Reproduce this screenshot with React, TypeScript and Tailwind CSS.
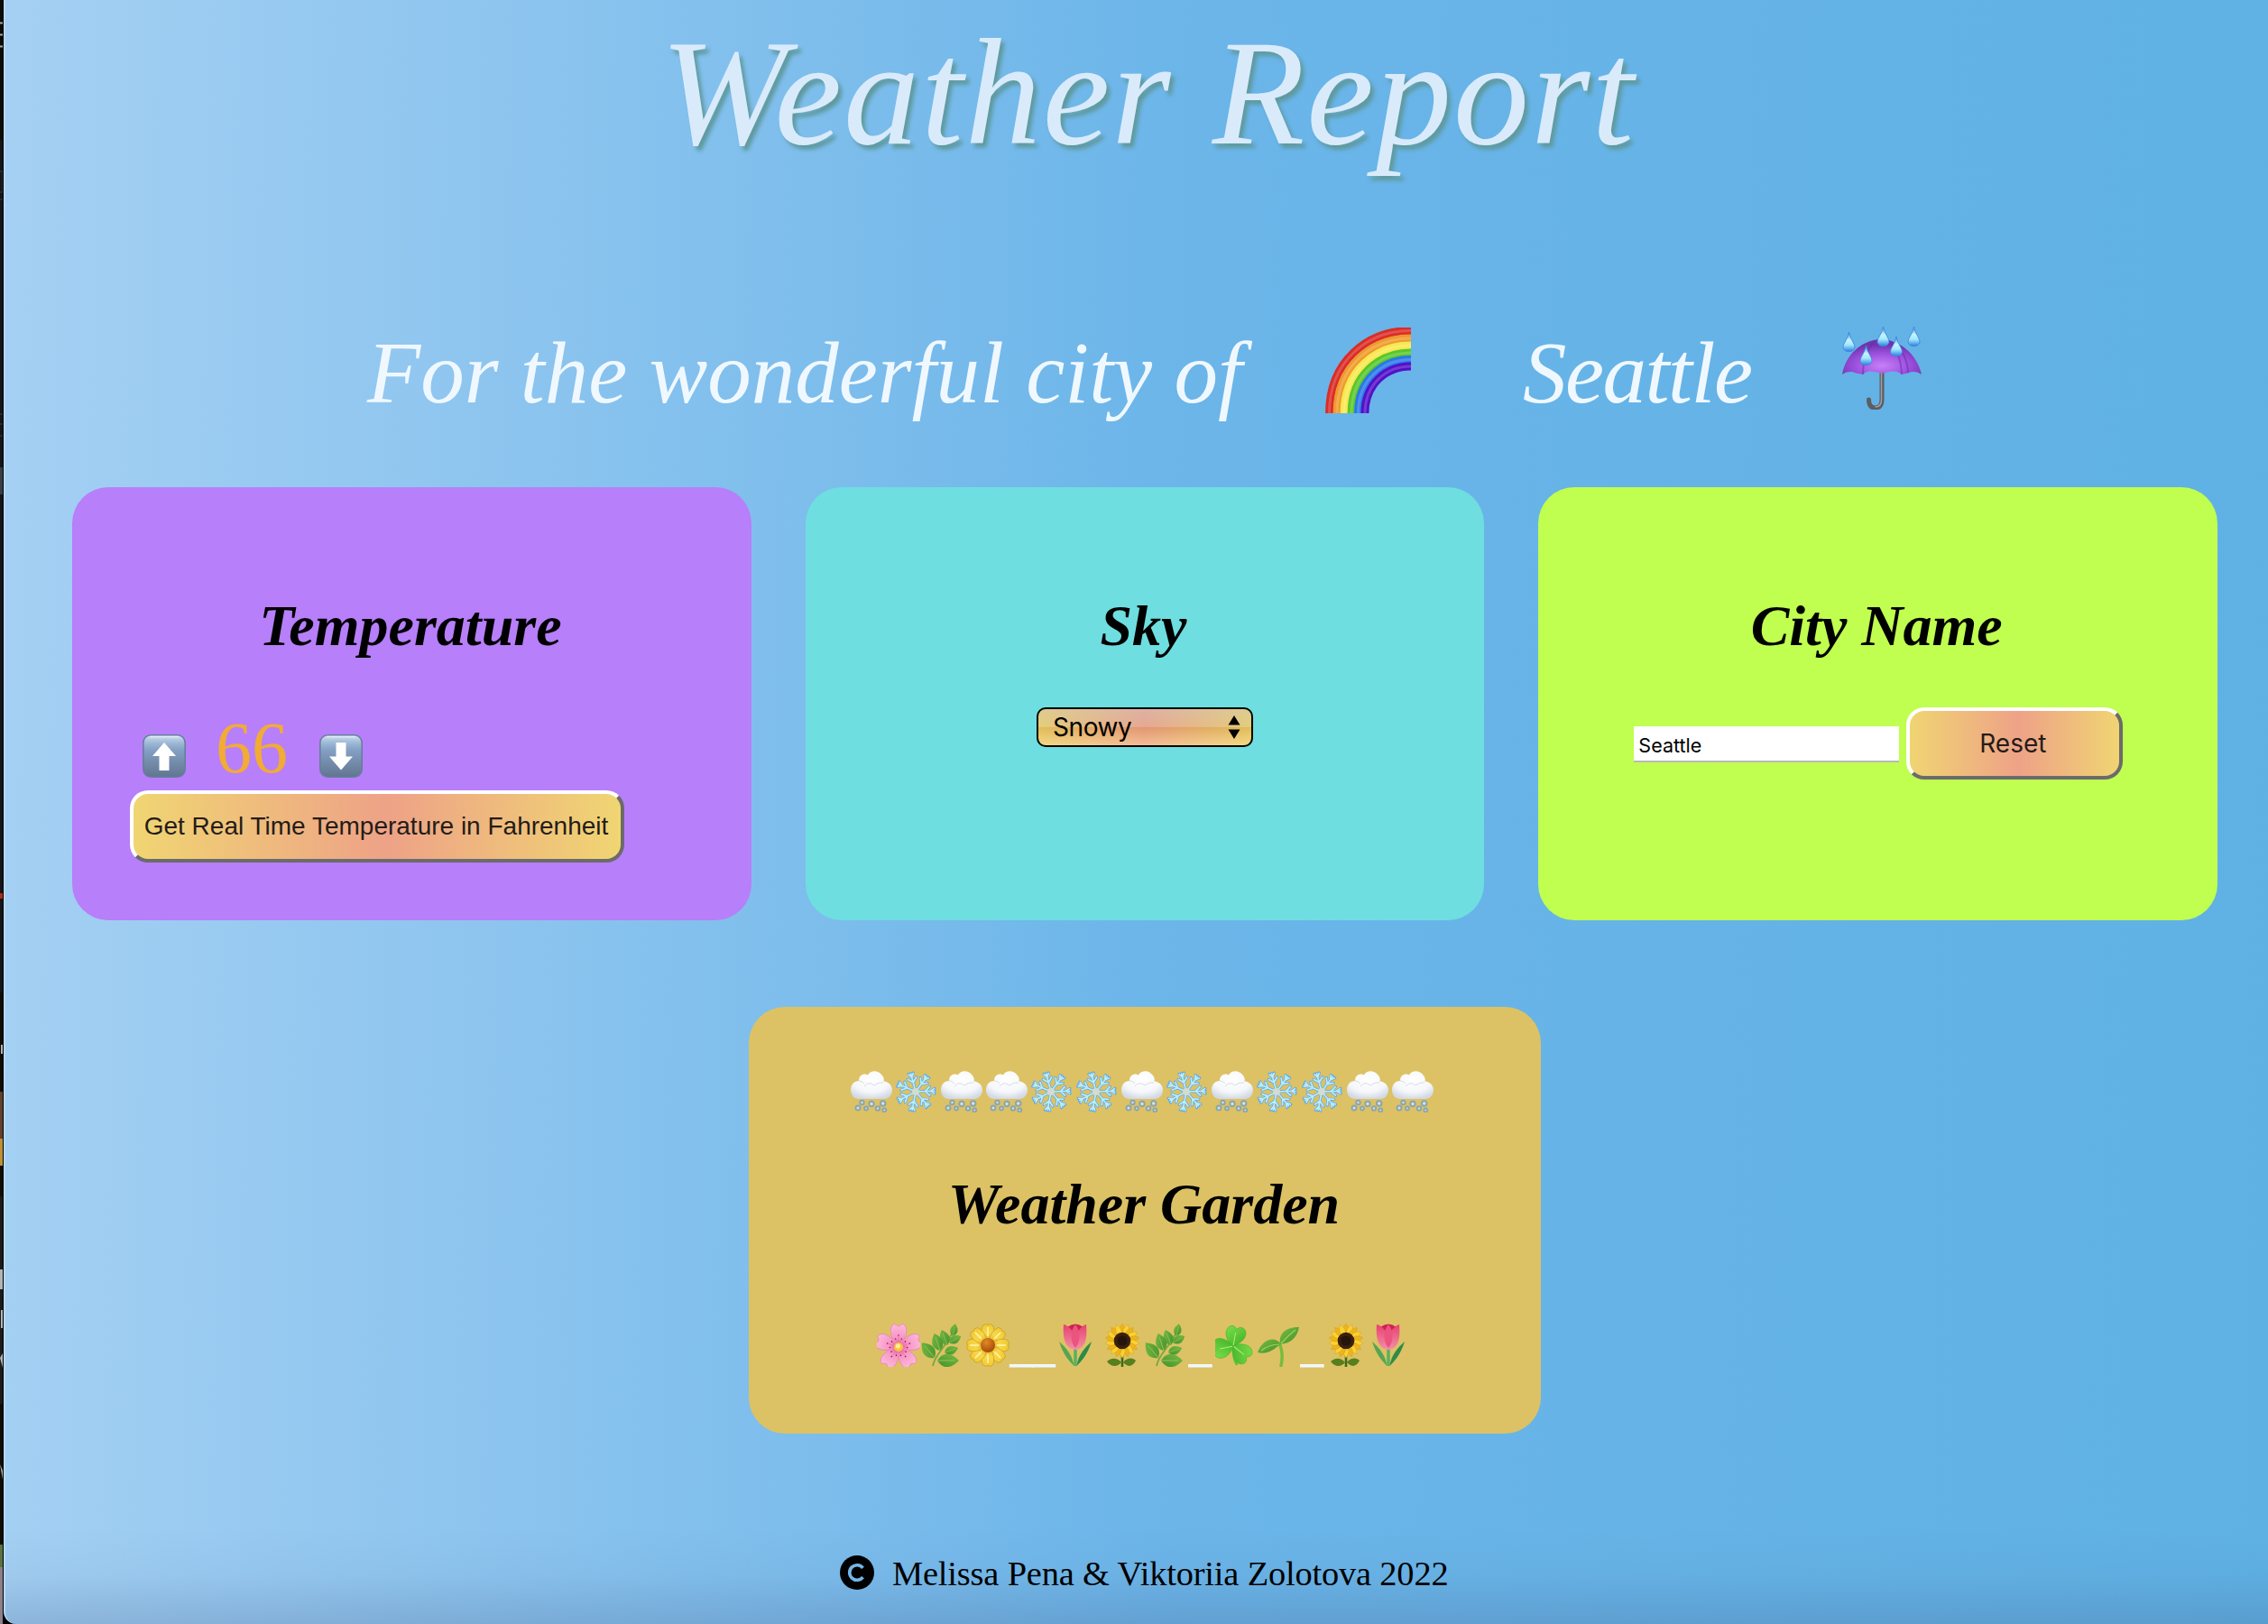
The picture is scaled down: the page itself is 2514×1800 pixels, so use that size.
import React from "react";

type IconProps = { className?: string };

const SCRIPT = "[font-family:'Apple_Chancery','Z003','URW_Chancery_L','Liberation_Serif',serif]";
const SERIF = "[font-family:'Liberation_Serif',serif]";

function Defs() {
  return (
    <svg width="0" height="0" className="absolute" aria-hidden="true">
      <defs>
        <linearGradient id="key" x1="0" y1="0" x2="0" y2="1">
          <stop offset="0" stopColor="#d3e2f0" />
          <stop offset="0.16" stopColor="#a3bdd9" />
          <stop offset="0.35" stopColor="#84a0c4" />
          <stop offset="1" stopColor="#61758f" />
        </linearGradient>
        <radialGradient id="cloud" cx="0.5" cy="0.3" r="0.7">
          <stop offset="0" stopColor="#ffffff" />
          <stop offset="0.65" stopColor="#f6f7fa" />
          <stop offset="1" stopColor="#d3dae6" />
        </radialGradient>
        <radialGradient id="brolly" cx="0.5" cy="0.75" r="0.6">
          <stop offset="0" stopColor="#c97ef8" />
          <stop offset="0.6" stopColor="#9a4fdc" />
          <stop offset="1" stopColor="#7034b0" />
        </radialGradient>
        <linearGradient id="drop" x1="0" y1="0" x2="0" y2="1">
          <stop offset="0" stopColor="#3f8fe0" />
          <stop offset="0.4" stopColor="#c5f3ff" />
          <stop offset="0.65" stopColor="#a5e8ff" />
          <stop offset="1" stopColor="#2b7fe0" />
        </linearGradient>
        <radialGradient id="pink" cx="24" cy="25" r="24" gradientUnits="userSpaceOnUse">
          <stop offset="0" stopColor="#e8609a" />
          <stop offset="0.4" stopColor="#f796c6" />
          <stop offset="1" stopColor="#fcb7dc" />
        </radialGradient>
        <radialGradient id="yellow" cx="24" cy="24" r="24" gradientUnits="userSpaceOnUse">
          <stop offset="0" stopColor="#dd9a16" />
          <stop offset="0.55" stopColor="#f7d848" />
          <stop offset="1" stopColor="#f0c832" />
        </radialGradient>
        <radialGradient id="bud" cx="0.4" cy="0.3" r="0.7">
          <stop offset="0" stopColor="#e08a28" />
          <stop offset="1" stopColor="#a84a08" />
        </radialGradient>
        <linearGradient id="tulip" x1="0" y1="0" x2="0" y2="1">
          <stop offset="0" stopColor="#e8406f" />
          <stop offset="1" stopColor="#f291a6" />
        </linearGradient>
        <linearGradient id="leaf" x1="0" y1="0" x2="1" y2="1">
          <stop offset="0" stopColor="#78bd42" />
          <stop offset="1" stopColor="#458f2c" />
        </linearGradient>
        <linearGradient id="clover" x1="0" y1="0" x2="1" y2="1">
          <stop offset="0" stopColor="#7be04a" />
          <stop offset="1" stopColor="#3fae26" />
        </linearGradient>
      </defs>
    </svg>
  );
}

function Rainbow({ className }: IconProps) {
  const bands: [number, string][] = [
    [91.5, "#dc2c26"],
    [83, "#f09a2c"],
    [75, "#f8e850"],
    [67, "#58c82a"],
    [59.5, "#2a78ea"],
    [52, "#5410c8"],
  ];
  return (
    <svg viewBox="0 0 96 96" className={className}>
      {bands.map(([r, c]) => (
        <g key={c} fill="none">
          <path d={`M${96 - r} 95 C${96 - r} ${95 - r * 0.62} ${96 - r * 0.55} ${95 - r} 95 ${95 - r}`} stroke={c} strokeWidth="8.8" />
          <path d={`M${96 - r} 95 C${96 - r} ${95 - r * 0.62} ${96 - r * 0.55} ${95 - r} 95 ${95 - r}`} stroke="#fff" strokeOpacity="0.18" strokeWidth="3" />
        </g>
      ))}
    </svg>
  );
}

function Umbrella({ className }: IconProps) {
  const drops: [number, number][] = [[8, 6], [46, 0], [80, 0], [60.5, 11], [27, 21]];
  return (
    <svg viewBox="0 0 90 92" className={className}>
      <path d="M45 50V81Q45 90 37.500 90Q30.500 90 30.500 81" fill="none" stroke="#5d5d61" strokeWidth="5" strokeLinecap="round" />
      <path d="M44.500 51V81Q44.500 89 37.500 89" fill="none" stroke="#a0a0a4" strokeWidth="1.500" />
      <path d="M1 53C5 31 22 15 44 14C66 15 84 31 89 53Q82 48 74 51.500L67 53Q61 48 53 50L45 52L36 50Q29 48 24 53L16 51.500Q8 48 1 53Z" fill="url(#brolly)" />
      <path d="M67 53Q66 29 53 16M74 51Q73 30 58 18M24 53Q24 31 36 17" fill="none" stroke="#6a2ea8" strokeOpacity="0.55" strokeWidth="1.800" />
      {drops.map(([x, y]) => (
        <path key={x} transform={`translate(${x - 7} ${y}) scale(1 0.94)`} d="M7.500 0C9 9 14 13 14 18.500A6.700 6 0 0 1 1 18.500C1 13 6 9 7.500 0Z" fill="url(#drop)" stroke="#3c88dc" strokeWidth="0.900" />
      ))}
    </svg>
  );
}

function ArrowKey({ down, className }: IconProps & { down?: boolean }) {
  return (
    <svg viewBox="0 0 48 48" className={className}>
      <rect x="0.800" y="0.800" width="46.400" height="46.400" rx="8.500" fill="url(#key)" stroke="#687e9e" strokeWidth="1.600" />
      <path d="M8 2.600H40" stroke="#e9f2fa" strokeWidth="1.500" strokeOpacity="0.700" />
      <path d={down ? "M18.500 9H29.500V24.500H37L24 39.500L11 24.500H18.500Z" : "M24 9L37 24H29.500V40H18.500V24H11Z"} fill="#fff" />
    </svg>
  );
}

function SnowCloud() {
  const flakes: [number, number, number][] = [[8, 41, 2.5], [12.5, 35, 2.2], [17, 41.500, 1.9], [23, 36.500, 2.7], [30, 41.500, 2.2], [35.700, 36, 2.8], [37.300, 43.500, 1.900]];
  return (
    <svg viewBox="0 0 46 46" className="h-[46px] w-[46px]">
      <path d="M10 31C3 31 0 26 0 21C0 15 4 11 9 11C9 5 14 2 19 4.500C22 -1 30 -1 34 4C37 7 37 9 36.500 11.500C42 12 46 16 46 21C46 27 42 31 36 31Z" fill="url(#cloud)" />
      <path d="M15 17Q20 11 26 16Q31 12 36 13M9 11Q13 11 15 14" fill="none" stroke="#d8dde7" strokeWidth="1" />
      {flakes.map(([x, y, r], i) => (
        <circle key={i} cx={x} cy={y} r={r} fill="#d5e0e2" stroke="#8ca6ac" strokeWidth="2" />
      ))}
    </svg>
  );
}

function Snowflake() {
  return (
    <svg viewBox="-23 -23 46 46" className="-ml-px mr-px h-[46px] w-[46px]">
      {[-15, 36.400, 87.900, 139.300, 190.700, 242.200, 293.600].map((a) => (
        <g key={a} transform={`rotate(${a})`} fill="none" strokeLinecap="round" strokeLinejoin="round">
          <path d="M0 0V-21M0 -10.500L-5 -15.500M0 -10.500L5 -15.500M0 -16.500L-2.800 -21M0 -16.500L2.800 -21" stroke="#5fa6ea" strokeWidth="3.100" />
          <path d="M0 0V-20.500M0 -10.500L-4.800 -15.300M0 -10.500L4.800 -15.300M0 -16.500L-2.600 -20.500M0 -16.500L2.600 -20.500" stroke="#b9eef8" strokeWidth="1.700" />
        </g>
      ))}
      <circle r="4" fill="#d2dcd2" />
    </svg>
  );
}

function Blossom() {
  return (
    <svg viewBox="0 0 48 48" className="h-[48px] w-[48px]">
      {[0, 72, 144, 216, 288].map((a) => (
        <g key={a} transform={`rotate(${a} 24 26)`}>
          <path d="M24 26C16 18 13 7 17 2Q19 -1 21.500 1.500L24 3L26.500 1.500Q29 -1 31 2C35 7 32 18 24 26Z" fill="url(#pink)" stroke="#e87fb2" strokeWidth="0.700" />
          <path d="M24 25V14M24 25L21 17M24 25L27 17" stroke="#d9649a" strokeWidth="0.500" />
          <circle cx="24" cy="13" r="0.800" fill="#9c1444" />
          <circle cx="20.500" cy="17" r="0.800" fill="#9c1444" />
          <circle cx="27.500" cy="17" r="0.800" fill="#9c1444" />
        </g>
      ))}
      <circle cx="24" cy="26" r="5" fill="#f5c443" />
      <circle cx="23.500" cy="25" r="2.500" fill="#fdf09a" />
    </svg>
  );
}

function Herb() {
  const leaves: [number, number, number, number][] = [
    [34, 14, 12, 14], [28, 24, -20, 18], [30, 21, 62, 15], [20, 30, -18, 20], [25, 32, 72, 16], [14, 38, -40, 22], [17, 41, 90, 24],
  ];
  return (
    <svg viewBox="0 0 48 48" className="h-[48px] w-[48px]">
      <path d="M13 47C15 34 28 26 35 9" fill="none" stroke="#79a63e" strokeWidth="1.800" />
      {leaves.map(([x, y, a, l], i) => (
        <g key={i} transform={`translate(${x + 1} ${y}) rotate(${a}) scale(${l / 20})`}>
          <path d="M0 0C-8 -5 -8 -12 0 -20C8 -12 8 -5 0 0Z" fill="url(#leaf)" />
          <path d="M0 0V-16" stroke="#8cc057" strokeWidth="0.900" />
        </g>
      ))}
    </svg>
  );
}

function Daisy() {
  return (
    <svg viewBox="0 0 48 48" className="h-[48px] w-[48px]">
      {[0, 45, 90, 135, 180, 225, 270, 315].map((a) => (
        <g key={a} transform={`rotate(${a} 24 24)`}>
          <path d="M24 24C17 15 16 7 18.500 2Q21.500 -0.500 24 1.500Q26.500 -0.500 29.500 2C32 7 31 15 24 24Z" fill="url(#yellow)" stroke="#c99820" strokeWidth="0.700" />
          <path d="M24 14V4" stroke="#fff3a4" strokeWidth="1.600" />
        </g>
      ))}
      <circle cx="24" cy="24" r="8" fill="url(#bud)" />
    </svg>
  );
}

function Tulip() {
  return (
    <svg viewBox="0 0 48 48" className="-ml-1 h-[48px] w-[48px]">
      <path d="M24 26V47" stroke="#58b35c" strokeWidth="3.500" />
      <path d="M22.500 47C18 42 11 36 6 20C13 26 21 35 22.500 47Z" fill="#57a552" />
      <path d="M25.500 47C30 42 37 36 42 20C35 26 27 35 25.500 47Z" fill="#2f8a48" />
      <path d="M15 4Q24 -3 33 4L30 16H18Z" fill="#cf2150" />
      <path d="M11 1C16 2 21 7 24 14C27 7 32 2 36 1C37 12 37 28 24 29C11 28 10 12 11 1Z" fill="url(#tulip)" />
      <path d="M24 1C18 8 18 20 24 27C30 20 30 8 24 1Z" fill="#ea547f" />
    </svg>
  );
}

function Sunflower() {
  return (
    <svg viewBox="0 0 48 48" className="h-[48px] w-[48px]">
      <path d="M24 34V48" stroke="#3c6a1c" strokeWidth="2.600" />
      <path d="M23 43C18 37 11 38 7 42C12 49 19 48 23 43ZM25 43C30 37 36 38 39 41C35 49 29 48 25 43Z" fill="#577f1e" />
      {Array.from({ length: 18 }, (_, i) => i * 20).map((a) => (
        <path key={a} transform={`rotate(${a} 24 19)`} d="M24 13C19 9 21 4 24 0C27 4 29 9 24 13Z" fill={a % 40 ? "#f9d332" : "#edb41c"} stroke="#d9950f" strokeWidth="0.400" />
      ))}
      <circle cx="24" cy="19" r="9.300" fill="#3a210d" />
      <circle cx="24" cy="19" r="5.500" fill="#25150a" />
    </svg>
  );
}

function Shamrock() {
  return (
    <svg viewBox="0 0 48 48" className="ml-1 h-[48px] w-[48px]">
      <path d="M21 25C21 34 22 42 25 46" fill="none" stroke="#5cc63a" strokeWidth="3" strokeLinecap="round" />
      {[10, 128, 258].map((a) => (
        <g key={a} transform={`rotate(${a} 21 25)`}>
          <path d="M21 25C12 21 7 10 12 4Q17 -1 21.500 5Q27 -1 32 5C36 12 29 21 21 25Z" fill="url(#clover)" stroke="#48b02c" strokeWidth="0.600" />
          <path d="M21 24V9" stroke="#a8f07a" strokeWidth="1.100" />
        </g>
      ))}
    </svg>
  );
}

function Seedling() {
  return (
    <svg viewBox="0 0 48 48" className="h-[48px] w-[48px]">
      <path d="M27 47C29 37 28 28 25 22" fill="none" stroke="#74bd3a" strokeWidth="3.400" strokeLinecap="round" />
      <path d="M26 23C24 11 32 4 47 4C45 15 38 22 26 23Z" fill="url(#leaf)" />
      <path d="M26 23C23 15 8 14 1 32C12 35 20 28 26 23Z" fill="url(#leaf)" />
      <path d="M27 22Q35 13 43 7M25 23Q14 23 5 30" fill="none" stroke="#96d45c" strokeWidth="1.200" />
    </svg>
  );
}

const SKY = "csccsscscsscc";

const GARDEN: (React.FC | string)[] = [Blossom, Herb, Daisy, "__", Tulip, Sunflower, Herb, "_", Shamrock, Seedling, "_", Sunflower, Tulip];

function Card({ title, color, children }: { title: string; color: string; children: React.ReactNode }) {
  return (
    <section className={`h-[480px] flex-1 rounded-[40px] pt-[118px] ${color}`}>
      <h2 className="pr-[3px] text-center text-[64px] leading-[72px] font-bold italic">{title}</h2>
      {children}
    </section>
  );
}

const BUTTON =
  "h-20 rounded-[20px] border-4 border-t-white border-l-white border-r-[#6b6b6b] border-b-[#6b6b6b] bg-[linear-gradient(90deg,#f0d672,#eea287_52%,#f0d672)] bg-origin-border text-[28px] whitespace-nowrap text-[#241c18]";

function Background() {
  return (
    <svg viewBox="0 0 3 1800" className="absolute top-0 left-0 h-[1800px] w-[3px]">
      <rect width="3" height="1800" fill="#15161c" />
      <rect width="3" height="155" fill="#0d0c05" />
      <path d="M0 25.500H3M0 38.500H3M0 51.500H3" stroke="#aaa" strokeWidth="2" />
      <path d="M0 190H3V213H0M0 221H3M0 459H3M0 470H3M0 483H3" stroke="#3a3e45" fill="none" />
      <rect y="518" width="3" height="30" fill="#3a3e45" />
      <rect y="990" width="3" height="6" fill="#b82a18" />
      <rect y="1100" width="3" height="700" fill="#100d05" />
      <rect y="1210" width="3" height="52" fill="#65402c" />
      <rect y="1262" width="3" height="30" fill="#c09033" />
      <rect y="1326" width="3" height="230" fill="#1d1c1a" />
      <path d="M1 1158H3V1168H1ZM0 1407H3V1429H0ZM1 1452H3V1472H1ZM0 1505L3 1500V1516ZM0 1623L3 1630V1640Z" fill="#b5b5b5" />
      <rect y="1712" width="3" height="25" fill="#59743c" />
      <rect y="1737" width="3" height="63" fill="#8d7f8b" />
    </svg>
  );
}

export default function App() {
  return (
    <div className={`relative h-[1800px] w-[2514px] overflow-hidden bg-black pl-1 text-black ${SERIF}`}>
      <Defs />
      <Background />
      <div className="flex h-[1800px] flex-col overflow-hidden rounded-bl-[14px] border-l-2 border-[#b4d9f6] bg-[linear-gradient(180deg,transparent_94%,rgba(70,95,140,0.05)_97%,rgba(70,95,140,0.24)_100%),linear-gradient(91deg,#a5d0f3_0%,#6bb5e9_52%,#5fb1e4_100%)]">
        <header className={`flex h-[540px] flex-col italic ${SCRIPT}`}>
          <h1 className="mt-0.5 pl-[726px] text-[168px] leading-[200px] tracking-[2px] whitespace-nowrap text-[#d9ebfb] [text-shadow:4px_5px_4px_#5f9a9f]">Weather Report</h1>
          <div className="mt-[158px] flex h-[108px] items-start text-[97px] leading-[108px] whitespace-nowrap text-[#f0f8ff]">
            <span className="w-[1463px] pl-[401px]">For the wonderful city of</span>
            <Rainbow className="mt-[3px] h-24 w-24" />
            <span className="w-[476px] pl-[123px] tracking-[-1.5px]">Seattle</span>
            <Umbrella className="mt-0.5 h-[92px] w-[90px]" />
          </div>
        </header>

        <main>
          <div className="flex gap-[60px] pr-14 pl-[74px]">
            <Card title="Temperature" color="bg-[#b77ffa]">
              <div className="mt-[55px] flex h-[91px] items-start pl-[78px]">
                <ArrowKey className="mt-[29px] h-12 w-12" />
                <span className="mr-[35px] ml-[33px] w-20 text-[80px] leading-[88px] text-[#f2ab34]">66</span>
                <ArrowKey down className="mt-[29px] h-12 w-12" />
              </div>
              <button className={`ml-16 w-[548px] pr-0.5 [font-family:'Liberation_Sans',sans-serif] ${BUTTON}`}>Get Real Time Temperature in Fahrenheit</button>
            </Card>

            <Card title="Sky" color="bg-[#6edee0]">
              <div className="mx-auto mt-[54px] flex h-11 w-60 items-center justify-between rounded-[10px] border-2 border-black bg-[linear-gradient(180deg,rgba(205,200,200,0.5),rgba(205,200,200,0.25)_50%,rgba(190,130,60,0.25)_50%,rgba(255,235,190,0.45)),linear-gradient(90deg,#ecd060,#ee9c82_50%,#ecd060)] bg-origin-border pr-3 pl-4 [font-family:'Inter',sans-serif]">
                <span className="text-[28px] tracking-[-0.4px]">Snowy</span>
                <svg viewBox="0 0 14 26" className="h-[26px] w-[14px]">
                  <path d="M7 0L13.500 10.500H0.500ZM7 26L13.500 15.500H0.500Z" />
                </svg>
              </div>
            </Card>

            <Card title="City Name" color="bg-[#c0fe50]">
              <div className="mt-[54px] flex items-start pl-[106px] [font-family:'Inter',sans-serif]">
                <input readOnly value="Seattle" className="mt-[21px] h-10 w-[294px] border-b-2 border-[#b9b9b9] bg-white px-[5px] pt-1 text-[21.500px] outline-none" />
                <button className={`ml-2 w-60 pr-1 ${BUTTON}`}>Reset</button>
              </div>
            </Card>
          </div>

          <section className="mt-24 ml-[824px] h-[473px] w-[878px] rounded-[40px] bg-[#dcc265] pt-[71px]">
            <div className="flex h-[46px] gap-1 pl-[113px]">
              {SKY.split("").map((k, i) => (k === "c" ? <SnowCloud key={i} /> : <Snowflake key={i} />))}
            </div>
            <h2 className="mt-[66px] pr-0.5 text-center text-[64px] leading-[72px] font-bold italic">Weather Garden</h2>
            <div className="mt-24 flex h-12 pl-[141px] text-[49.500px] text-[#f0f8ff]">
              {GARDEN.map((Item, i) =>
                typeof Item === "string" ? (
                  <span key={i} className="[-webkit-text-stroke:1px_#f0f8ff] [line-height:52px]">{Item}</span>
                ) : (
                  <span key={i} className="flex w-[49.600px] justify-center"><Item /></span>
                ),
              )}
            </div>
          </section>
        </main>

        <footer className="mt-[126px] flex items-center pl-[925px] text-[38.400px] leading-[50px]">
          <svg viewBox="0 0 38 38" className="mt-0.5 h-[38px] w-[38px]">
            <circle cx="19" cy="19" r="19" />
            <path d="M25.500 13.800A8.300 8.300 0 1 0 25.500 24.200" fill="none" stroke="#76b6e6" strokeWidth="3.600" />
          </svg>
          <span className="mt-1 ml-5 tracking-[-0.17px]">Melissa Pena &amp; Viktoriia Zolotova 2022</span>
        </footer>
      </div>
    </div>
  );
}
